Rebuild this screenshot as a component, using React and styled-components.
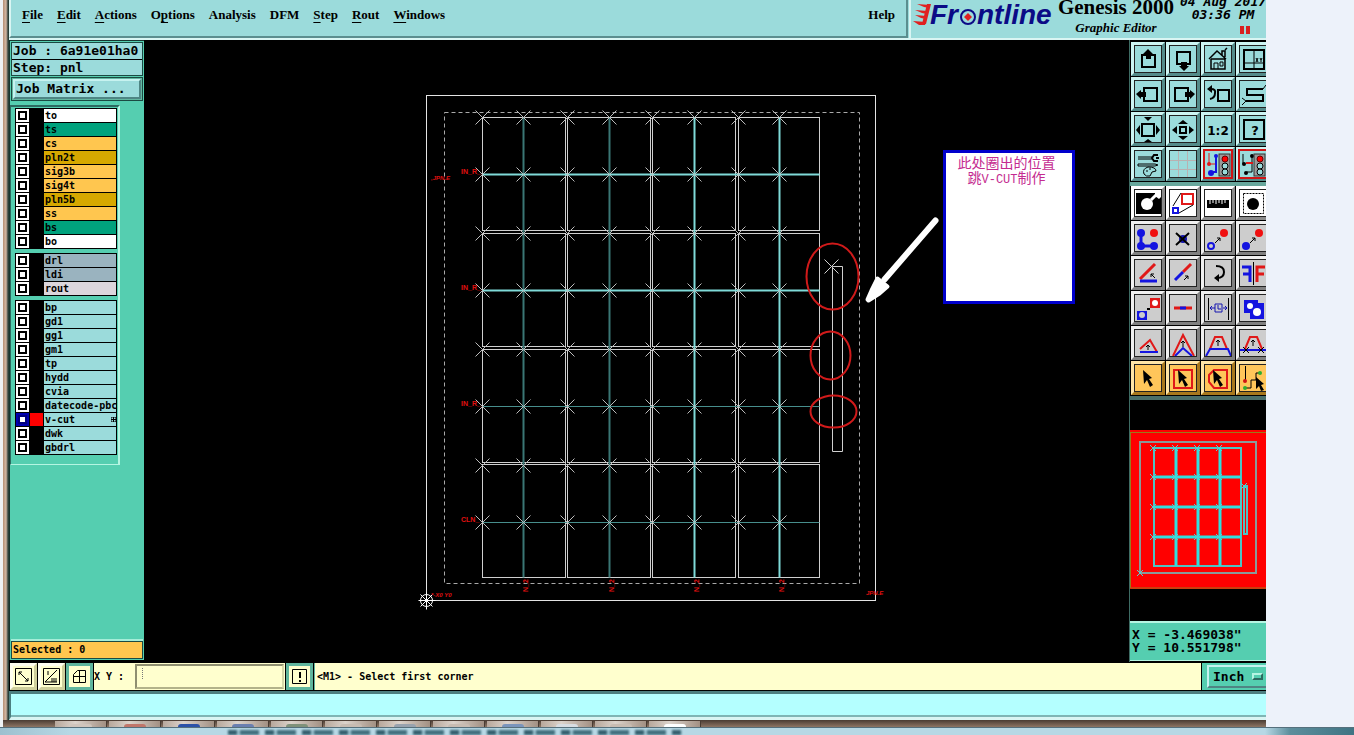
import React, { useState } from 'react';
import styled, { createGlobalStyle, css } from 'styled-components';

const GlobalStyle = createGlobalStyle`
  *, *::before { box-sizing: border-box; }
  body {
    margin: 0;
    background: #edf2fa;
    overflow: hidden;
  }
  button, input, select { font: inherit; color: inherit; }
`;

const mono = '"DejaVu Sans Mono", "Liberation Mono", monospace';
const serif = '"Liberation Serif", "Times New Roman", serif';

const raised = css`
  border: 2px solid;
  border-color: #c6f2f0 #4f8584 #4f8584 #c6f2f0;
`;

const Page = styled.div`
  height: 100vh;
  min-height: 560px;
  display: flex;
  flex-direction: column;
  color: #000;
  font-family: ${mono};
  font-size: 10px;
  font-weight: bold;
`;

const Desktop = styled.div`
  flex: 1;
  min-height: 0;
  display: flex;
  margin-right: 88px;
  border-left: 3px solid #eef2f5;
`;

const WindowEdge = styled.div`
  width: 6px;
  background: linear-gradient(to right, #b58f74, #d3b8a5 3px, #35443f 5px, #1d3a34);
`;

const Window = styled.div`
  flex: 1;
  min-width: 0;
  display: flex;
  flex-direction: column;
  background: #000;
`;

/* ---- header ---- */

const Header = styled.header`
  display: flex;
  height: 40px;
  flex: none;
  overflow: hidden;
  background: #9bdbdb;
  border-bottom: 2px solid #d9f5f3;
`;

const MenuBar = styled.nav`
  flex: 1;
  display: flex;
  align-items: flex-start;
  gap: 14px;
  padding: 6px 11px 0 11px;
  border: solid #5b8e8f;
  border-width: 0 2px 2px 0;
  border-left: 2px solid #d9f5f3;
  font-family: ${serif};
  font-size: 13px;
`;

const MenuButton = styled.button`
  padding: 0;
  border: 0;
  background: none;
  line-height: 18px;
  font-weight: bold;
  margin-left: ${p => (p.$last ? 'auto' : '0')};

  u { text-underline-offset: 3px; }
`;

const Brand = styled.div`
  width: 357px;
  display: flex;
  border-left: 2px solid #d9f5f3;
  margin-left: 1px;
  overflow: hidden;

  svg { flex: none; }
`;

const TitleBlock = styled.div`
  width: 122px;
  flex: none;
  display: flex;
  flex-direction: column;
  justify-content: flex-end;
  align-items: center;
  font-family: ${serif};
  white-space: nowrap;
`;

const AppTitle = styled.h1`
  margin: 0;
  font-size: 21px;
  line-height: 22px;
  font-weight: bold;
`;

const SubTitle = styled.div`
  font-size: 13px;
  line-height: 20px;
  font-style: italic;
`;

const Clock = styled.div`
  width: 90px;
  flex: none;
  margin-left: 1px;
  display: flex;
  flex-direction: column;
  justify-content: flex-end;
  align-items: center;
  font-size: 13px;
  line-height: 13px;
  font-style: italic;
  white-space: nowrap;
`;

const PauseMark = styled.div`
  display: flex;
  gap: 2px;
  margin: 5px 0 4px 44px;

  i {
    width: 4px;
    height: 8px;
    background: #d92020;
  }
`;

/* ---- left column ---- */

const Main = styled.main`
  flex: 1;
  min-height: 0;
  display: flex;
`;

const SideBar = styled.aside`
  width: 135px;
  flex: none;
  display: flex;
  flex-direction: column;
  background: #55ceb0;
  border-left: 1px solid #17352f;
  border-top: 1px solid #17352f;
  margin-bottom: 2px;
`;

const JobBox = styled.div`
  margin: 1px 1px 0;
  border: 1px solid #1b4a42;
  background: #9bdbdb;
  font-size: 13px;
`;

const JobLine = styled.div`
  height: 16px;
  line-height: 16px;
  padding-left: 1px;
  overflow: hidden;
  white-space: nowrap;

  & + & { border-top: 1px solid #000; }
`;

const MatrixFrame = styled.div`
  margin: 1px 1px 0;
  padding: 1px;
  border: 1px solid #1b4a42;
  background: #62b7a0;
`;

const MatrixButton = styled.button`
  ${raised}
  display: block;
  width: 100%;
  height: 20px;
  padding: 0 1px;
  background: #9bdbdb;
  font-size: 13px;
  font-weight: bold;
  line-height: 16px;
  text-align: left;
`;

const LayerPanel = styled.div`
  margin-top: 4px;
  width: 110px;
  padding: 1px 2px 9px 4px;
  background: #55ceb0;
  border: 2px solid #2c6a60;
  border-left-width: 1px;
  border-right: 2px solid #b5f5e2;
  border-bottom: 1px solid #b5f5e2;
`;

const LayerGroup = styled.div`
  background: #000;
  width: 102px;
  padding: 1px 1px 0;
  margin-bottom: 4px;

  &:last-child { margin-bottom: 0; }
`;

const LayerRow = styled.label`
  display: flex;
  height: 14px;
  padding-bottom: 1px;
`;

const LayerCheck = styled.input.attrs({ type: 'checkbox' })`
  appearance: none;
  flex: none;
  width: 13px;
  height: 13px;
  margin: 0;
  padding: 2px;
  background: #fff;

  &::before {
    content: "";
    display: block;
    width: 9px;
    height: 9px;
    background: #fff;
    border: 2px solid #000;
  }
  &:checked { background: #0000b0; }
  &:checked::before { border-color: #000080; }
`;

const Swatch = styled.span`
  flex: none;
  width: 13px;
  margin: 0 1px;
  background: ${p => (p.$on ? '#ff0000' : '#000')};
`;

const LayerName = styled.span`
  flex: 1;
  display: flex;
  justify-content: space-between;
  align-items: center;
  padding-left: 1px;
  overflow: hidden;
  white-space: nowrap;
  line-height: 13px;
  background: ${p => p.$color};
`;

const Selected = styled.div`
  margin: auto 1px 1px;
  height: 18px;
  line-height: 16px;
  padding-left: 1px;
  border: 1px solid #1b4a42;
  background: #ffc64f;
  box-shadow: 0 -2px 0 #a5edd8;
`;

/* ---- drawing area ---- */

const Canvas = styled.section`
  flex: 1;
  min-width: 0;
  position: relative;
  background: #000;

  svg {
    display: block;
    width: 100%;
    height: 100%;
  }
`;

// note lies over the board drawing
const Note = styled.div`
  position: absolute;
  left: 799px;
  top: 110px;
  width: 132px;
  height: 154px;
  padding: 4px 5px 0 0;
  border: 3px solid #0000cc;
  background: #fff;
  color: #c42b90;
  font-family: "Liberation Mono", "Noto Sans CJK SC", sans-serif;
  font-size: 14px;
  font-weight: normal;
  line-height: 15px;
  text-align: center;

  p { margin: 0; }
  span { font-size: 12px; }
`;

/* ---- right column ---- */

const ToolColumn = styled.aside`
  width: 137px;
  flex: none;
  display: flex;
  flex-direction: column;
  overflow: hidden;
  border-left: 1px solid #3e6c64;
`;

const ToolGrid = styled.div`
  display: grid;
  grid-template-columns: repeat(4, 35px);
  grid-auto-rows: 35px;
  padding-top: ${p => (p.$first ? '2px' : '0')};
  border-bottom: 4px solid ${p => (p.$first ? '#67a79c' : '#4a6f6a')};
  background: #000;
`;

const tones = {
  teal: ['#9bdbdb', '#cdf5f3', '#548b8a'],
  white: ['#ffffff', '#ffffff', '#8b8b8b'],
  grey: ['#cdcdcd', '#f0f0f0', '#808080'],
  amber: ['#ffc65a', '#ffe5a6', '#a8781d'],
};

const ToolButton = styled.button`
  width: 34px;
  height: 34px;
  margin-left: 1px;
  padding: 0;
  border: 3px solid;
  border-color: ${p => `${tones[p.$tone][1]} ${tones[p.$tone][2]} ${tones[p.$tone][2]} ${tones[p.$tone][1]}`};
  background: ${p => tones[p.$tone][0]};

  svg {
    display: block;
    width: 28px;
    height: 28px;
    border: 1px solid ${p => (p.$hot ? '#d01414' : '#222')};
    box-shadow: ${p => (p.$hot ? '0 0 0 1px #d01414' : 'none')};
  }
`;

const Overview = styled.div`
  margin-top: 30px;
  flex: none;
  height: 159px;
  background: #f00;
  svg { display: block; }
`;

const Coordinates = styled.div`
  margin-top: auto;
  margin-bottom: 1px;
  height: 40px;
  padding: 5px 0 0 2px;
  border-top: 2px solid #b5f5e2;
  border-bottom: 1px solid #b5f5e2;
  background: #55ceb0;
  font-size: 13px;
  line-height: 13px;
  white-space: pre;
`;

/* ---- bottom bars ---- */

const StatusBar = styled.footer`
  flex: none;
  display: flex;
  gap: 1px;
  height: 29px;
  padding: 1px 0 1px 1px;
  background: #000;
`;

const StatusButton = styled.button`
  width: 27px;
  padding: 0;
  display: grid;
  place-items: center;
  border: 3px solid;
  border-color: ${p => (p.$on ? '#5fb59d' : '#fffff0 #cfcf9c #cfcf9c #fffff0')};
  background: #ffffce;
`;

const EntryLabel = styled.label`
  display: flex;
  align-items: center;
  width: 191px;
  background: #ffffce;
  white-space: pre;
`;

const Entry = styled.input`
  flex: 1;
  min-width: 0;
  align-self: stretch;
  margin: 1px 1px 1px 11px;
  padding: 0 5px;
  border: 2px solid;
  border-color: #8f8f70 #d8d8a8 #b3b38a #8f8f70;
  border-radius: 0;
  background: repeating-linear-gradient(#777 0 1px, #ffffce 1px 2px) 5px 2px / 1px 12px no-repeat #ffffce;
`;

const Message = styled.output`
  flex: 1;
  padding-left: 2px;
  background: #ffffce;
  line-height: 27px;
  border-left: 1px solid #5fb59d;
`;

const UnitBox = styled.div`
  width: 64px;
  overflow: hidden;
  padding: 2px 0 2px 5px;
  background: #55ceb0;
`;

const UnitButton = styled.button`
  ${raised}
  width: 66px;
  height: 23px;
  padding: 0 4px;
  display: flex;
  align-items: center;
  gap: 8px;
  background: #55ceb0;
  font-size: 13px;
  font-weight: bold;

  i {
    width: 11px;
    height: 7px;
    border: 2px solid;
    border-color: #b5f5e2 #2c6a60 #2c6a60 #b5f5e2;
  }
`;

const InfoBar = styled.div`
  flex: none;
  height: 29px;
  border: solid;
  border-width: 3px 0 3px 2px;
  border-color: #4c7f80 #4c7f80 #d9f5f3 #4c7f80;
  background: #b4ffff;
  box-shadow: inset 0 -2px 0 #7fb5b5;
`;

const TaskBar = styled.div`
  flex: none;
  display: flex;
  gap: 2px;
  height: 7px;
  margin-left: -6px;
  padding: 1px 0 0 52px;
  background: linear-gradient(#4a3c33, #8d7564);
`;

const Task = styled.span`
  width: 52px;
  background: linear-gradient(to right, #b8a89c, #dcd3cb 40%, #a29083);
  border-right: 1px solid #4a3c33;
  display: flex;
  justify-content: center;

  i {
    width: 22px;
    height: 3px;
    margin-top: 3px;
    border-radius: 3px 3px 0 0;
    background: ${p => p.$mark};
  }
`;

const Glass = styled.div`
  flex: none;
  height: 8px;
  border-top: 1px solid #55707c;
  background: linear-gradient(to right, #9dc0cf, #b7d8e5 70px, #b7d8e5 1265px, #5d8e9c 1290px, #3f7483);
  display: flex;
  padding-left: 228px;
`;

const GlassText = styled.div`
  width: 454px;
  margin-top: 2px;
  height: 5px;
  filter: blur(1px);
  background: repeating-linear-gradient(to right, #35606f 0 9px, #9cc3d0 9px 12px, #43707f 12px 31px, #b7d8e5 31px 37px);
`;

const groups = [
  [
    ['to', '#ffffff'], ['ts', '#00a27d'], ['cs', '#ffc64f'], ['pln2t', '#d6a800'], ['sig3b', '#ffc64f'],
    ['sig4t', '#ffc64f'], ['pln5b', '#d6a800'], ['ss', '#ffc64f'], ['bs', '#00a27d'], ['bo', '#ffffff'],
  ],
  [['drl', '#9ab3bf'], ['ldi', '#9ab3bf'], ['rout', '#dcd6dc']],
  ['bp', 'gd1', 'gg1', 'gm1', 'tp', 'hydd', 'cvia', 'datecode-pbc', 'v-cut', 'dwk', 'gbdrl'].map(n => [n, '#9bdbdb']),
];

// label, index of the underlined letter
const menus = [
  ['File', 0], ['Edit', 0], ['Actions', 0], ['Options', 1], ['Analysis', -1],
  ['DFM', -1], ['Step', 0], ['Rout', 0], ['Windows', 0],
];

const K = { fill: 'none', stroke: '#000', strokeWidth: 2 };
const R = { fill: 'none', stroke: '#e01818', strokeWidth: 2 };
const B = { fill: 'none', stroke: '#1414e0', strokeWidth: 2 };
const thin = { fill: 'none', stroke: '#000', strokeWidth: 1 };
const cursor = 'M9 6l9 8-3 1 4 6-3 2-3-7-3 4z';

const Lights = () => (
  <g>
    <rect x="15" y="4" width="11" height="22" fill="#999" stroke="#333" />
    <circle cx="21" cy="9" r="3" fill="#f00" stroke="#600" />
    <circle cx="21" cy="16" r="3" fill="#9bdbdb" stroke="#000" />
    <circle cx="21" cy="22" r="3" fill="#9bdbdb" stroke="#000" />
  </g>
);

const viewTools = [
  ['Pan up', <><rect x="8" y="10" width="13" height="12" {...K} /><path d="M14 4l5 5h-2v5h-5V9H9z" /></>],
  ['Pan down', <><rect x="8" y="7" width="13" height="12" {...K} /><path d="M15 26l5-5h-2v-4h-6v4h-2z" /></>],
  ['Home', <><path d="M5 14l8-8 9 8M7 14v10h14V14M7 14h14M18 10V6h3v6M21 5l2-2" {...thin} strokeWidth="1.500" /><path d="M10 24v-6h4v6M16 17h3v4h-3z" {...thin} /></>],
  ['View pane', <><rect x="5" y="5" width="20" height="19" {...K} /><path d="M15 5v19M5 18h20M17 13l2 4M19 13l-2 4M21 13l1 2 1-2M22 15v2" {...thin} /></>],
  ['Pan left', <><rect x="10" y="8" width="13" height="13" {...K} /><path d="M2 14l5-4v2h5v5H7v2z" /></>],
  ['Pan right', <><rect x="6" y="8" width="13" height="13" {...K} /><path d="M26 14l-5-4v2h-5v5h5v2z" /></>],
  ['Previous view', <><rect x="14" y="10" width="11" height="11" {...K} /><path d="M5 9h2q5 0 4 4 0 5-5 6" {...K} /><path d="M3 9l5-4v8z" /></>],
  ['Snake', <><path d="M24 9H8v6h16v6H7" {...K} /><path d="M24 9l3-4M7 21l-4-3M7 21l-4 4" {...thin} /></>],
  ['Zoom out', <><rect x="8" y="9" width="12" height="12" {...K} /><path d="M14 6l4-4h-8zM14 24l4 3h-8zM2 15l4-5v10zM26 15l-4-5v10z" /></>],
  ['Zoom in', <><rect x="11" y="12" width="6" height="6" {...K} /><path d="M14 5l5 4H9zM14 25l5-4H9zM3 15l5-4v8zM25 15l-5-4v8z" /></>],
  ['Scale 1:2', <text x="14" y="20" textAnchor="middle" fontFamily="DejaVu Sans" fontSize="12" fontWeight="bold">1:2</text>],
  ['Help', <><rect x="5" y="5" width="20" height="19" {...K} /><text x="16" y="20" textAnchor="middle" fontFamily="DejaVu Sans" fontSize="13">?</text></>],
  ['Settings', <><path d="M4 7h15M4 9h15M4 14h17l3 1-3 1H4z" {...thin} /><path d="M24 5h-4l-2 3 2 3h4M22 8h3" {...K} /><path d="M10 24q-2-5 4-7 8 0 8 4l-4 1-2 4q-4 1-6-2z" {...thin} /><path d="M12 21h2M15 19h2" {...thin} /></>],
  ['Grid', <path d="M9.500 0v28M18.500 0v28M0 10.500h28M0 19.500h28" fill="none" stroke="#b9b1b1" />],
  ['Affected layers', <><path d="M4 14h8M5 3v11" fill="none" stroke="#e01818" /><path d="M12 6v16H7" {...B} /><circle cx="12" cy="6" r="2" fill="#1414e0" /><circle cx="7" cy="23" r="3" fill="#1414e0" /><circle cx="5" cy="14" r="2" fill="#e01818" /><Lights /></>, true],
  ['Layer display', <><path d="M13 6v16H8M4 4v10" {...thin} /><path d="M7 13h7" {...R} /><circle cx="13" cy="6" r="2" /><circle cx="7" cy="23" r="2" /><circle cx="5" cy="14" r="2" /><Lights /></>, true],
];

const editTools = [
  ['Contourize', 'white', <><path d="M2 4h25v21H2z" /><circle cx="13" cy="15" r="6" fill="#fff" /><path d="M17 11l6-6" stroke="#fff" strokeWidth="3" /><path d="M21 3h7v4l-3 3-4-3z" fill="#fff" /></>],
  ['Resize', 'white', <><rect x="13" y="5" width="11" height="10" {...R} /><rect x="4" y="19" width="5" height="5" {...B} /><path d="M4 17L12 4M10 24l14-8" {...thin} /></>],
  ['Measure', 'white', <><path d="M3 11h22v8H3z" /><path d="M6 11v4M9 11v3M12 11v4M15 11v3M18 11v4M21 11v3" stroke="#fff" /></>],
  ['Feature', 'white', <><circle cx="14" cy="15" r="6" /><rect x="4.500" y="4.500" width="20" height="20" {...thin} strokeDasharray="2 1" /></>],
  ['Move', 'grey', <><path d="M7 9v13h13" stroke="#1414e0" strokeWidth="3" fill="none" /><circle cx="7" cy="9" r="4" fill="#1414e0" /><circle cx="7" cy="22" r="4" fill="#1414e0" /><circle cx="20" cy="22" r="4" fill="#1414e0" /><circle cx="20" cy="9" r="4" fill="#f01010" /></>],
  ['Delete', 'grey', <><circle cx="14" cy="15" r="4" fill="#1414b0" /><path d="M7 9l13 12M20 9L7 21" {...K} /></>],
  ['Copy', 'grey', <><circle cx="7" cy="22" r="3" {...B} /><circle cx="20" cy="9" r="4" fill="#f01010" /><path d="M11 19l5-5M13 14h3v3" {...thin} /></>],
  ['Copy to layer', 'grey', <><circle cx="7" cy="22" r="4" fill="#1414e0" /><circle cx="20" cy="9" r="4" fill="#f01010" /><path d="M11 19l5-5M13 14h3v3" {...thin} /></>],
  ['Rotate', 'grey', <><path d="M6 20L21 5" {...R} strokeWidth="3" /><path d="M6 22h17" {...B} strokeWidth="3" /><path d="M21 19l-4-4M17 18v-3h3" {...thin} /></>],
  ['Stretch', 'grey', <><path d="M14 13l8-8" {...R} strokeWidth="3" /><path d="M6 21l8-8" {...B} strokeWidth="3" /><path d="M15 21l4-4M16 17h3v3" {...thin} /></>],
  ['Turn', 'grey', <><path d="M12 7q8 0 8 6t-7 6" {...K} /><path d="M10 19l5-4v8z" /></>],
  ['Mirror', 'grey', <><path d="M3 8h8v15M4 15h7" {...B} strokeWidth="3" /><path d="M26 8h-8v15M18 15h7" {...R} strokeWidth="3" /><path d="M14.500 3v23" {...thin} /></>],
  ['Replace', 'grey', <><rect x="16" y="4" width="10" height="10" fill="#e01818" /><circle cx="21" cy="9" r="3" fill="#fff" /><rect x="3" y="17" width="10" height="9" fill="#1414e0" /><circle cx="8" cy="21" r="3" fill="#cdcdcd" /><path d="M13 15h3" {...K} /></>],
  ['Line', 'grey', <><path d="M5 14h18" {...R} strokeWidth="3" /><path d="M11 14h6" {...B} strokeWidth="3" /></>],
  ['Space', 'grey', <><path d="M4.500 4v22M24.500 4v22" {...thin} /><path d="M6 14h5M19 14h4M8 12l-2 2 2 2M21 12l2 2-2 2M11 10h7v8h-7zM14 11v4h3" fill="none" stroke="#1414b0" /></>],
  ['Surface', 'grey', <><path d="M5 6h14v3h6v16H11v-6H5z" fill="#1414e0" /><circle cx="11" cy="12" r="3" fill="#fff" /><circle cx="18" cy="18" r="4" fill="#fff" /></>],
  ['Corner', 'grey', <><path d="M6 20l10-9 7 12" {...R} /><path d="M6 23h18" {...B} /><path d="M14 21v-5M12 18l2-2 2 2" {...thin} /></>],
  ['Chamfer', 'grey', <><path d="M4 27L14 6l11 21" {...R} /><path d="M6 27l8-8 9 8" {...B} /><path d="M14 18v-6M12 14l2-2 2 2" {...thin} /></>],
  ['Trapeze', 'grey', <><path d="M6 20l5-12h7l5 12" {...R} /><path d="M2 27l4-7h18l3 7" {...B} /><path d="M14 17v-6M12 13l2-2 2 2" {...thin} /></>],
  ['Trim', 'grey', <><path d="M6 20l5-12h7l5 12" {...R} /><path d="M1 21h26" {...B} /><path d="M14 17v-6M12 13l2-2 2 2M4 18l6 6M10 18l-6 6M19 18l6 6M25 18l-6 6" {...thin} /></>],
  ['Select', 'amber', <path d={cursor} />],
  ['Select box', 'amber', <><rect x="5" y="6" width="18" height="18" {...R} /><path d={cursor} /></>],
  ['Select polygon', 'amber', <><path d="M10 6h13v18H10l-5-6v-7z" {...R} /><path d={cursor} /></>],
  ['Select net', 'amber', <><path d="M6.500 2v15M7 24h5v-8h5v-7h5" {...thin} /><circle cx="6" cy="17" r="2" fill="#d01414" /><circle cx="6" cy="24" r="2" fill="#2fae2f" /><circle cx="21" cy="9" r="2" fill="#2fae2f" /><path d="M17 13l8 7-3 1 3 5-3 1-2-5-3 3z" /></>],
];

const cellX = [[482, 565], [567, 650], [652, 735], [738, 819]];
const cellY = [[117, 230], [233, 346], [349, 462], [464, 577]];
const crossX = [482, 523, 567, 609, 652, 694, 738, 779];
const crossY = [117, 174, 233, 290, 349, 406, 465, 522];

const cross = (x, y, r = 7) => `M${x - r} ${y - r}l${2 * r} ${2 * r}M${x + r} ${y - r}l${-2 * r} ${2 * r}`;

function Board() {
  return (
    <svg viewBox="144 40 985 622" preserveAspectRatio="xMinYMin meet" aria-label="Panel drawing">
      <g fill="none" transform="translate(.5 .5)">
        <rect x="426" y="95" width="449" height="505" stroke="#e4e4e4" />
        <rect x="444" y="112" width="415" height="471" stroke="#a9a9a9" strokeDasharray="4 3" />
        {cellX.map(([x1, x2]) => cellY.map(([y1, y2]) => (
          <rect key={`${x1}-${y1}`} x={x1} y={y1} width={x2 - x1} height={y2 - y1} stroke="#cfcfcf" />
        )))}
        <path d="M523 117v460M609 117v460" stroke="#3a7674" strokeWidth="2" />
        <path d="M482 406h337M482 522h337" stroke="#478e8c" />
        <path d="M694 117v460M779 117v460M482 174h337M482 290h337" stroke="#7fdad8" strokeWidth="2" />
        <path d={crossX.map(x => crossY.map(y => cross(x, y)).join('')).join('')} stroke="#bcbcbc" />
        <path d={`M832 266h10v185h-10z${cross(831, 266)}`} stroke="#d0d0d0" />
        <g stroke="#fff">
          <circle cx="426" cy="600" r="6" />
          <path d={`M418 600h17M426 592v17${cross(426, 600, 6)}`} />
        </g>
        <g stroke="#d01a1a" strokeWidth="2">
          <ellipse cx="832" cy="276" rx="26" ry="33" />
          <ellipse cx="830" cy="355" rx="20" ry="24" />
          <ellipse cx="833" cy="411" rx="23" ry="16" />
        </g>
        <path d="M935 220L884 279" stroke="#fff" strokeWidth="6" strokeLinecap="round" />
        <path d="M877 278l10 8-8 7-11 7-1-1 4-9z" fill="#fff" stroke="#fff" strokeWidth="4" strokeLinejoin="round" />
      </g>
      <g fill="#e01010" fontFamily="Liberation Sans" fontSize="7" fontWeight="bold">
        {[174, 290, 406].map(y => <text key={y} x="461" y={y}>IN_R_</text>)}
        <text x="461" y="522">CLN_</text>
        <g fontStyle="italic" fontSize="6">
          <text x="431" y="180">,JPN.E</text>
          <text x="431" y="597">*-X0 Y0</text>
          <text x="866" y="595">JPN.E</text>
        </g>
        {[523, 609, 694, 779].map(x => (
          <text key={x} transform={`translate(${x + 5} 592) rotate(-90)`}>N_2</text>
        ))}
      </g>
    </svg>
  );
}

function Minimap() {
  const xs = [1153, 1175, 1197, 1219];
  const ys = [448, 477, 507, 537];
  return (
    <svg viewBox="1130 430 136 159" width="136" height="159" aria-label="Overview">
      <path d="M1130 432.500h136M1130.500 432v156h136" fill="none" stroke="#9a7a1a" />
      <g fill="none" stroke="#8a9a9a" strokeWidth="2">
        <path d="M1140 442h116v131h-116z" />
        <path d="M1154 448h87v118h-87zM1244 486h3v48h-3z" stroke="#4fc4c4" />
      </g>
      <path d="M1176 448v118M1198 448v118M1220 448v118M1154 477h87M1154 507h87M1154 537h87" stroke="#2fdede" strokeWidth="3" />
      <path
        d={xs.map(x => ys.map(y => cross(x, y, 3)).join('')).join('') + cross(1140, 573, 3) + cross(1244, 486, 3)}
        stroke="#4fd4d4"
      />
    </svg>
  );
}

function Frontline() {
  return (
    <svg width="144" height="38" viewBox="0 0 144 38" aria-label="Frontline">
      <path d="M6 4l13 1-1 3-5-1zM4 10l13 1-1 3-5-1zM4 15l12 1-1 3-5-1zM2 21l13 1-1 3H8z" fill="#e02020" />
      <path d="M16 4h4l-5 20h-4z" fill="#e02020" />
      <g fontFamily="Liberation Sans, Arial, sans-serif" fontSize="28" fontWeight="bold" fontStyle="italic" fill="#0b0b86">
        <text x="19" y="24">Fr</text>
        <text x="66" y="24">ntline</text>
      </g>
      <circle cx="57" cy="17" r="7" fill="none" stroke="#0b0b86" strokeWidth="2" />
      <path d="M57 13l4 4-4 4-4-4z" fill="#e02020" />
    </svg>
  );
}

const tasks = ['#d0c5bc', '#c0766a', '#2b52a8', '#6a7fb0', '#7f917a', '#c8bcb2', '#98a2ae', '#c8bcb2', '#7a95bc', '#d8dde2', '#c8bcb2', '#ffffff'];

const MenuText = ({ text, mark }) => {
  if (mark < 0) return text;
  return <>{text.slice(0, mark)}<u>{text[mark]}</u>{text.slice(mark + 1)}</>;
};

const App = () => {
  const [active, setActive] = useState({ 'v-cut': true });
  const [xy, setXy] = useState('');

  const toggle = name => setActive({ ...active, [name]: !active[name] });

  return (
    <Page>
      <GlobalStyle />
      <Desktop>
        <WindowEdge />
        <Window>
          <Header>
            <MenuBar>
              {menus.map(([text, mark]) => (
                <MenuButton key={text}><MenuText text={text} mark={mark} /></MenuButton>
              ))}
              <MenuButton $last>Help</MenuButton>
            </MenuBar>
            <Brand>
              <Frontline />
              <TitleBlock>
                <AppTitle>Genesis 2000</AppTitle>
                <SubTitle>Graphic Editor</SubTitle>
              </TitleBlock>
              <Clock>
                <span>04 Aug 2017</span>
                <span>03:36 PM</span>
                <PauseMark><i /><i /></PauseMark>
              </Clock>
            </Brand>
          </Header>

          <Main>
            <SideBar>
              <JobBox>
                <JobLine>Job : 6a91e01ha0</JobLine>
                <JobLine>Step: pnl</JobLine>
              </JobBox>
              <MatrixFrame><MatrixButton>Job Matrix ...</MatrixButton></MatrixFrame>
              <LayerPanel>
                {groups.map((rows, i) => (
                  <LayerGroup key={i}>
                    {rows.map(([name, color]) => (
                      <LayerRow key={name}>
                        <LayerCheck checked={!!active[name]} onChange={() => toggle(name)} />
                        <Swatch $on={active[name]} />
                        <LayerName $color={color}>
                          {name}
                          {active[name] && (
                            <svg width="5" height="5"><path d="M0 0h5v5H0zM0 2.500h5M2.500 0v5" fill="none" stroke="#000" /></svg>
                          )}
                        </LayerName>
                      </LayerRow>
                    ))}
                  </LayerGroup>
                ))}
              </LayerPanel>
              <Selected>Selected : 0</Selected>
            </SideBar>

            <Canvas>
              <Board />
              <Note>
                <p>此处圈出的位置</p>
                <p>跳<span>V-CUT</span>制作</p>
              </Note>
            </Canvas>

            <ToolColumn>
              <ToolGrid $first>
                {viewTools.map(([label, icon, hot]) => (
                  <ToolButton key={label} aria-label={label} $tone="teal" $hot={hot}>
                    <svg viewBox="1 1 26 26">{icon}</svg>
                  </ToolButton>
                ))}
              </ToolGrid>
              <ToolGrid>
                {editTools.map(([label, tone, icon]) => (
                  <ToolButton key={label} aria-label={label} $tone={tone}>
                    <svg viewBox="1 1 26 26">{icon}</svg>
                  </ToolButton>
                ))}
              </ToolGrid>
              <Overview><Minimap /></Overview>
              <Coordinates>{'X = -3.469038"\nY = 10.551798"'}</Coordinates>
            </ToolColumn>
          </Main>

          <StatusBar>
            <StatusButton aria-label="Snap to point">
              <svg width="19" height="19"><path d="M1.500 1.500h16v16h-16zM5 5l9 9M5 8V5h3M14 11v3h-3" {...thin} /></svg>
            </StatusButton>
            <StatusButton aria-label="Snap angle">
              <svg width="19" height="19"><path d="M1.500 1.500h16v16h-16zM3 15L15 3M6 4v4M3 15h12M10 15v-4M12 11v4M14 11v4" {...thin} /></svg>
            </StatusButton>
            <StatusButton $on aria-label="Grid snap">
              <svg width="15" height="15"><path d="M5.500 1.500h8v12h-12v-8zM1 7.500h13M7.500 1v13" {...thin} /></svg>
            </StatusButton>
            <EntryLabel>
              X Y :
              <Entry value={xy} onChange={e => setXy(e.target.value)} />
            </EntryLabel>
            <StatusButton $on aria-label="Alert">
              <svg width="17" height="17"><path d="M1.500 1.500h14v14h-14z" {...thin} /><path d="M8 4h2v6H8zM8 12h2v2H8z" /></svg>
            </StatusButton>
            <Message>&lt;M1&gt; - Select first corner</Message>
            <UnitBox><UnitButton>Inch<i /></UnitButton></UnitBox>
          </StatusBar>
          <InfoBar />
          <TaskBar>
            {tasks.map((mark, i) => <Task key={i} $mark={mark}><i /></Task>)}
          </TaskBar>
        </Window>
      </Desktop>
      <Glass><GlassText /></Glass>
    </Page>
  );
};

export default App;
